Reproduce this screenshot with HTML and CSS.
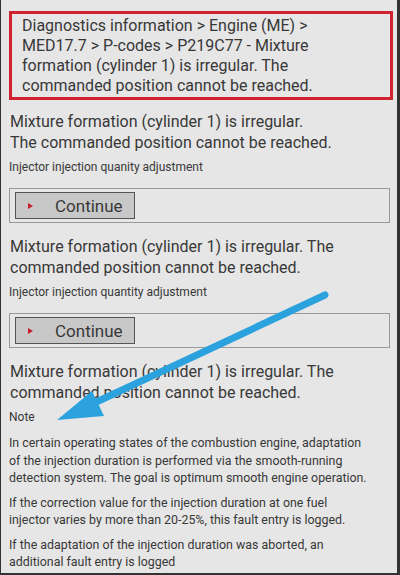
FILE: index.html
```html
<!DOCTYPE html>
<html lang="en">
<head>
    <meta charset="UTF-8">
    <meta name="viewport" content="width=device-width, initial-scale=1.0">
    <title>Diagnostics information</title>
    <link rel="stylesheet" href="styles.css">
</head>
<body>
    <div class="page">
        <!-- Breadcrumb / fault code -->
        <div class="path-box">
            Diagnostics information &gt; Engine (ME) &gt; MED17.7 &gt; P-codes &gt; P219C77 - Mixture formation (cylinder 1) is irregular. The commanded position cannot be reached.
        </div>

        <div class="section">
            <div class="heading first">Mixture formation (cylinder 1) is irregular.<br>The commanded position cannot be reached.</div>
            <div class="sub">Injector injection quanity adjustment</div>
            <div class="action-box">
                <button class="btn-continue"><span class="tri"></span>Continue</button>
            </div>
        </div>

        <div class="section">
            <div class="heading">Mixture formation (cylinder 1) is irregular. The commanded position cannot be reached.</div>
            <div class="sub">Injector injection quantity adjustment</div>
            <div class="action-box">
                <button class="btn-continue"><span class="tri"></span>Continue</button>
            </div>
        </div>

        <div class="section">
            <div class="heading">Mixture formation (cylinder 1) is irregular. The commanded position cannot be reached.</div>
            <div class="sub note">Note</div>
            <p>In certain operating states of the combustion engine, adaptation of the injection duration is performed via the smooth-running detection system. The goal is optimum smooth engine operation.</p>
            <p>If the correction value for the injection duration at one fuel injector varies by more than 20-25%, this fault entry is logged.</p>
            <p>If the adaptation of the injection duration was aborted, an additional fault entry is logged</p>
        </div>

        <!-- annotation arrow -->
        <svg class="arrow" width="400" height="575" viewBox="0 0 400 575">
            <line x1="325" y1="295" x2="90" y2="405" stroke="#2ba2dd" stroke-width="7" stroke-linecap="round"/>
            <polygon points="57,420 92,391 104,416" fill="#2ba2dd"/>
        </svg>
    </div>
</body>
</html>
```

FILE: styles.css
```css
body {
    margin: 0;
    font-family: Roboto, "Liberation Sans", Arial, sans-serif;
    color: #383838;
    background-color: #e6e6e6;
}
.page {
    position: relative;
    height: 575px;
    box-sizing: border-box;
    border-left: 1px solid #333;
    border-right: 3px solid #333;
    border-bottom: 2px solid #333;
    padding-top: 11px;
    overflow: hidden;
}
.path-box {
    margin: 0 4px 0 8px;
    border: 3px solid #cf2331;
    padding: 2px 60px 1px 10px;
    font-size: 16px;
    line-height: 20px;
}
.section {
    padding: 0 28px 0 8px;
}
.heading {
    margin-top: 13px;
    padding-left: 1px;
    font-size: 16px;
    line-height: 21px;
}
.heading.first {
    margin-top: 11px;
}
.sub {
    margin-top: 6px;
    font-size: 12px;
    line-height: 16px;
}
.action-box {
    margin: 13px -21px 0 0;
    border: 1px solid #999;
    padding: 3px 5px 3px 5px;
}
.btn-continue {
    display: flex;
    align-items: center;
    width: 120px;
    height: 27px;
    padding: 0 0 0 12px;
    background-color: #c8c8c8;
    border: 1px solid #555;
    font-family: Roboto, "Liberation Sans", Arial, sans-serif;
    font-size: 17px;
    color: #383838;
}
.tri {
    width: 0;
    height: 0;
    border-top: 3px solid transparent;
    border-bottom: 3px solid transparent;
    border-left: 5px solid #c8202c;
    margin-right: 22px;
}
.note {
    margin-top: 6px;
}
p {
    margin: 7px 0 0 0;
    font-size: 12.4px;
    line-height: 17.5px;
}
.section p:first-of-type {
    margin-top: 9px;
}
.arrow {
    position: absolute;
    left: -1px;
    top: 0;
}
```
